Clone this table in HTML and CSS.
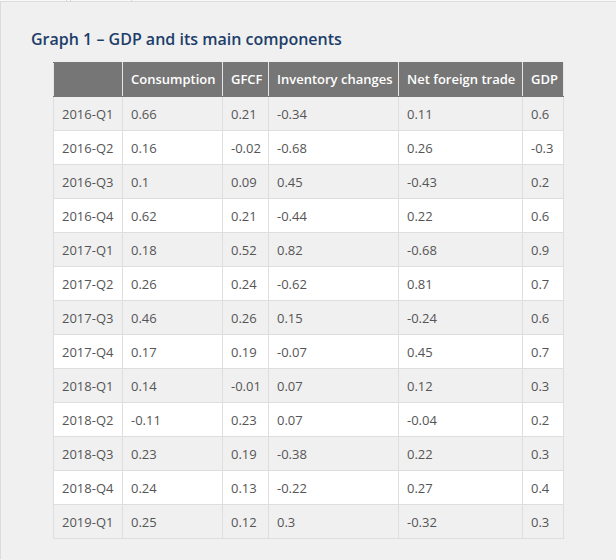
FILE: index.html
```html
<!DOCTYPE html>
<html>
<head>
<meta charset="utf-8">
<link rel="stylesheet" href="styles.css">
</head>
<body>
<div class="tabs"><span class="tab t1"></span><span class="tab t2"></span></div>
<div class="panel">
  <h2 class="title">Graph 1 – GDP and its main components</h2>
  <table class="data">
    <colgroup>
      <col class="c-date"><col class="c-cons"><col class="c-gfcf"><col class="c-inv"><col class="c-net"><col class="c-gdp">
    </colgroup>
    <thead>
      <tr><th></th><th>Consumption</th><th>GFCF</th><th>Inventory changes</th><th>Net foreign trade</th><th>GDP</th></tr>
    </thead>
    <tbody>
      <tr><td>2016-Q1</td><td>0.66</td><td>0.21</td><td>-0.34</td><td>0.11</td><td>0.6</td></tr>
      <tr><td>2016-Q2</td><td>0.16</td><td>-0.02</td><td>-0.68</td><td>0.26</td><td>-0.3</td></tr>
      <tr><td>2016-Q3</td><td>0.1</td><td>0.09</td><td>0.45</td><td>-0.43</td><td>0.2</td></tr>
      <tr><td>2016-Q4</td><td>0.62</td><td>0.21</td><td>-0.44</td><td>0.22</td><td>0.6</td></tr>
      <tr><td>2017-Q1</td><td>0.18</td><td>0.52</td><td>0.82</td><td>-0.68</td><td>0.9</td></tr>
      <tr><td>2017-Q2</td><td>0.26</td><td>0.24</td><td>-0.62</td><td>0.81</td><td>0.7</td></tr>
      <tr><td>2017-Q3</td><td>0.46</td><td>0.26</td><td>0.15</td><td>-0.24</td><td>0.6</td></tr>
      <tr><td>2017-Q4</td><td>0.17</td><td>0.19</td><td>-0.07</td><td>0.45</td><td>0.7</td></tr>
      <tr><td>2018-Q1</td><td>0.14</td><td>-0.01</td><td>0.07</td><td>0.12</td><td>0.3</td></tr>
      <tr><td>2018-Q2</td><td>-0.11</td><td>0.23</td><td>0.07</td><td>-0.04</td><td>0.2</td></tr>
      <tr><td>2018-Q3</td><td>0.23</td><td>0.19</td><td>-0.38</td><td>0.22</td><td>0.3</td></tr>
      <tr><td>2018-Q4</td><td>0.24</td><td>0.13</td><td>-0.22</td><td>0.27</td><td>0.4</td></tr>
      <tr><td>2019-Q1</td><td>0.25</td><td>0.12</td><td>0.3</td><td>-0.32</td><td>0.3</td></tr>
    </tbody>
  </table>
</div>
</body>
</html>
```
FILE: styles.css
```css
html, body {
  margin: 0;
  padding: 0;
  background: #f0f0f0;
  font-family: "Open Sans", "Liberation Sans", sans-serif;
}
.tabs {
  height: 1px;
  background: #fafafa;
  display: flex;
}
.tab {
  display: block;
  height: 1px;
}
.t1 {
  width: 66px;
  border-right: 1px solid #d6d6d6;
}
.t2 {
  margin-left: 3px;
  width: 60px;
  border-left: 1px solid #d6d6d6;
  border-right: 1px solid #d6d6d6;
}
.panel {
  border-top: 1px solid #dcdcdc;
  border-left: 1px solid #dcdcdc;
  padding: 26px 0 20px 30px;
  min-height: 540px;
  box-sizing: border-box;
}
.title {
  margin: 0 0 12px 0;
  font-size: 16px;
  line-height: 22px;
  font-weight: 600;
  color: #1d3e6a;
}
.data {
  margin-left: 22px;
  border-collapse: collapse;
  table-layout: fixed;
  width: 510px;
  font-size: 13px;
  color: #555;
}
.c-date { width: 69px; }
.c-cons { width: 100px; }
.c-gfcf { width: 46px; }
.c-inv { width: 130px; }
.c-net { width: 124px; }
.c-gdp { width: 41px; }
.data th, .data td {
  padding: 8px 8px 6px;
  line-height: 19px;
  text-align: left;
  white-space: nowrap;
  border: 1px solid #dedede;
}
.data th {
  padding: 7px 8px;
  background: #767676;
  color: #fff;
  font-weight: 600;
  border-color: #767676 #e6e6e6;
}
.data tbody tr:nth-child(odd) td { background: #f0f0f0; }
.data tbody tr:nth-child(even) td { background: #fff; }
```
